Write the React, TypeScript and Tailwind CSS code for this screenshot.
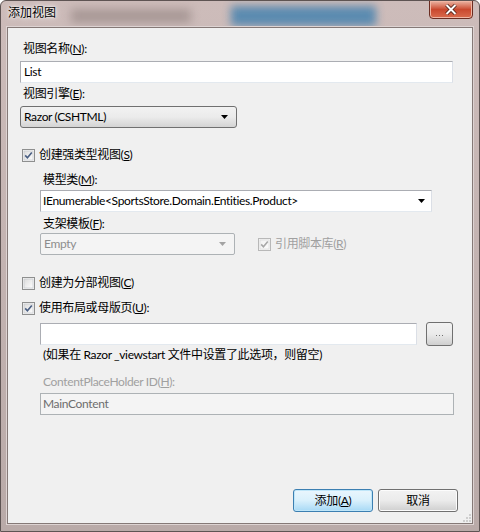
import React from "react";

const font = { fontFamily: 'Lato, "Noto Sans CJK SC", sans-serif' };

function CheckBox({ checked, disabled }: { checked?: boolean; disabled?: boolean }) {
  const border = disabled ? "#b8b8b8" : "#8e8f8f";
  const mark = disabled ? "#a8a8a8" : "#4a5f83";
  return (
    <svg width="13" height="13" viewBox="0 0 13 13" className="shrink-0">
      <defs>
        <linearGradient id={disabled ? "cbd" : "cb"} x1="0" y1="0" x2="1" y2="1">
          <stop offset="0" stopColor={disabled ? "#f2f2f2" : "#dcdcdc"} />
          <stop offset="1" stopColor={disabled ? "#fbfbfb" : "#fdfdfd"} />
        </linearGradient>
      </defs>
      <rect x="0.5" y="0.5" width="12" height="12" fill="#f4f4f4" stroke={border} />
      <rect x="2" y="2" width="9" height="9" fill={`url(#${disabled ? "cbd" : "cb"})`} stroke={disabled ? "#d6d6d6" : "#c0c4c8"} strokeWidth="0.6" />
      {checked && (
        <path d="M3.2 6.4 L5.4 8.8 L9.8 3.4" fill="none" stroke={mark} strokeWidth="1.6" />
      )}
    </svg>
  );
}

function Arrow({ color = "#000" }: { color?: string }) {
  return (
    <svg width="7" height="4" viewBox="0 0 7 4">
      <path d="M0 0 H7 L3.5 4 Z" fill={color} />
    </svg>
  );
}

function Label({ children, grey }: { children: React.ReactNode; grey?: boolean }) {
  return (
    <div className={`h-[16px] leading-[16px] ml-[3px] whitespace-nowrap ${grey ? "text-[#a0a0a0]" : "text-black"}`}>
      {children}
    </div>
  );
}

export default function App() {
  return (
    <div
      className="relative w-[480px] h-[532px] overflow-hidden bg-gradient-to-b from-[#cdbcba] to-[#b9aaa8] border border-[#5e5453] rounded-t-[6px] text-[12px] tracking-[-0.35px]"
      style={font}
    >
      {/* blurred glass behind title */}
      <div className="absolute left-[70px] top-[8px] w-[120px] h-[14px] bg-[#a89896] blur-[5px]" />
      <div className="absolute left-[230px] top-[5px] w-[145px] h-[20px] bg-[#3f7fae] blur-[4px] opacity-80" />

      {/* title bar */}
      <div className="relative h-[26px] flex items-start">
        <div className="pl-[7px] pt-[4px] text-[12px] leading-[16px] tracking-normal text-black [text-shadow:0_0_6px_#fff,0_0_3px_#fff]">添加视图</div>
        <div className="ml-auto mr-[6px] w-[44px] h-[19px] -mt-px rounded-b-[4px] border border-[#6b2d22] bg-gradient-to-b from-[#eab4a4] via-[#c9482e] to-[#d96b4d] flex items-center justify-center shadow-[inset_0_0_0_1px_#f0b6a4]">
          <svg width="12" height="11" viewBox="0 0 12 11">
            <path d="M1.5 1 L10.5 10 M10.5 1 L1.5 10" stroke="#4a1d14" strokeWidth="3.6" />
            <path d="M1.5 1 L10.5 10 M10.5 1 L1.5 10" stroke="#fff" strokeWidth="2" />
          </svg>
        </div>
      </div>

      {/* client area */}
      <div className="relative mx-[6px] h-[497px] bg-[#f0f0f0] border border-[#857977] shadow-[0_0_0_1px_#ddd3d2] flex flex-col pl-[12px] pt-[13px] pb-[11px]">
        <Label>视图名称(<u>N</u>):</Label>
        <div className="mt-[4px] w-[433px] h-[22px] bg-white border border-[#abadb3] border-b-[#e3e9ef] border-r-[#dbdfe6] pl-[3px] leading-[20px] text-black">
          List
        </div>

        <div className="mt-[3px]">
          <Label>视图引擎(<u>E</u>):</Label>
        </div>
        <div className="mt-[4px] w-[217px] h-[22px] rounded-[3px] border border-[#707070] bg-gradient-to-b from-[#f2f2f2] via-[#ebebeb] to-[#d4d4d4] flex items-center pl-[3px] pr-[8px] text-black">
          <span className="leading-[20px]">Razor (CSHTML)</span>
          <span className="ml-auto flex"><Arrow /></span>
        </div>

        <div className="mt-[19px] h-[16px] flex items-center ml-[2px] gap-[4px] text-black">
          <CheckBox checked />
          <span className="leading-[16px]">创建强类型视图(<u>S</u>)</span>
        </div>

        <div className="pl-[20px] flex flex-col">
          <div className="mt-[9px]">
            <Label>模型类(<u>M</u>):</Label>
          </div>
          <div className="mt-[2px] w-[392px] h-[22px] bg-white border border-[#abadb3] border-b-[#e3e9ef] border-r-[#dbdfe6] flex items-center pl-[2px] pr-[6px] text-black">
            <span className="leading-[20px] whitespace-nowrap">IEnumerable&lt;SportsStore.Domain.Entities.Product&gt;</span>
            <span className="ml-auto flex"><Arrow /></span>
          </div>

          <div className="mt-[4px]">
            <Label>支架模板(<u>F</u>):</Label>
          </div>
          <div className="mt-[1px] flex items-center">
            <div className="w-[195px] h-[22px] rounded-[2px] border border-[#adb2b5] bg-[#f4f4f4] flex items-center pl-[3px] pr-[8px] text-[#8d8d8d]">
              <span className="leading-[20px]">Empty</span>
              <span className="ml-auto flex"><Arrow color="#a3a3a3" /></span>
            </div>
            <div className="ml-[23px] flex items-center gap-[4px] text-[#a0a0a0]">
              <CheckBox checked disabled />
              <span className="leading-[16px]">引用脚本库(<u>R</u>)</span>
            </div>
          </div>
        </div>

        <div className="mt-[20px] h-[16px] flex items-center ml-[2px] gap-[4px] text-black">
          <CheckBox />
          <span className="leading-[16px]">创建为分部视图(<u>C</u>)</span>
        </div>
        <div className="mt-[9px] h-[16px] flex items-center ml-[2px] gap-[4px] text-black">
          <CheckBox checked />
          <span className="leading-[16px]">使用布局或母版页(<u>U</u>):</span>
        </div>

        <div className="pl-[20px] flex flex-col">
          <div className="mt-[6px] flex items-start">
            <div className="mt-[1px] w-[377px] h-[22px] bg-white border border-[#abadb3] border-b-[#e3e9ef] border-r-[#dbdfe6]" />
            <div className="ml-[9px] w-[27px] h-[24px] rounded-[3px] border border-[#707070] bg-gradient-to-b from-[#f2f2f2] via-[#ebebeb] to-[#cfcfcf] flex items-center justify-center gap-[2px] pt-[3px]">
              <span className="w-[1px] h-[1px] bg-[#6f6f6f]" />
              <span className="w-[1px] h-[1px] bg-[#6f6f6f]" />
              <span className="w-[1px] h-[1px] bg-[#6f6f6f]" />
            </div>
          </div>
          <div className="mt-[1px]">
            <Label>(如果在 Razor _viewstart 文件中设置了此选项，则留空)</Label>
          </div>
          <div className="mt-[11px]">
            <Label grey>ContentPlaceHolder ID(<u>H</u>):</Label>
          </div>
          <div className="mt-[3px] w-[414px] h-[22px] bg-[#f4f4f4] border border-[#adb2b5] pl-[2px] leading-[20px] text-[#6d6d6d]">
            MainContent
          </div>
        </div>

        <div className="mt-auto flex justify-end pr-[14px] gap-[5px]">
          <div className="w-[80px] h-[23px] rounded-[3px] border border-[#3c7fb1] bg-gradient-to-b from-[#eaf6fd] via-[#d9f0fc] to-[#a7d9f5] shadow-[inset_0_0_0_1px_#bfe6f9] flex items-center justify-center text-black leading-[16px]">
            添加(<u>A</u>)
          </div>
          <div className="w-[80px] h-[23px] rounded-[3px] border border-[#707070] bg-gradient-to-b from-[#f2f2f2] via-[#ebebeb] to-[#cfcfcf] shadow-[inset_0_0_0_1px_#fcfcfc] flex items-center justify-center text-black leading-[16px]">
            取消
          </div>
        </div>

        {/* resize grip */}
        <div className="absolute right-[1px] bottom-[1px] w-[8px] h-[8px] grid grid-cols-3 gap-[1px] opacity-60">
          <span />
          <span />
          <span className="bg-[#b8b8b8] w-[2px] h-[2px]" />
          <span />
          <span className="bg-[#b8b8b8] w-[2px] h-[2px]" />
          <span className="bg-[#b8b8b8] w-[2px] h-[2px]" />
          <span className="bg-[#b8b8b8] w-[2px] h-[2px]" />
          <span className="bg-[#b8b8b8] w-[2px] h-[2px]" />
          <span className="bg-[#b8b8b8] w-[2px] h-[2px]" />
        </div>
      </div>
    </div>
  );
}
